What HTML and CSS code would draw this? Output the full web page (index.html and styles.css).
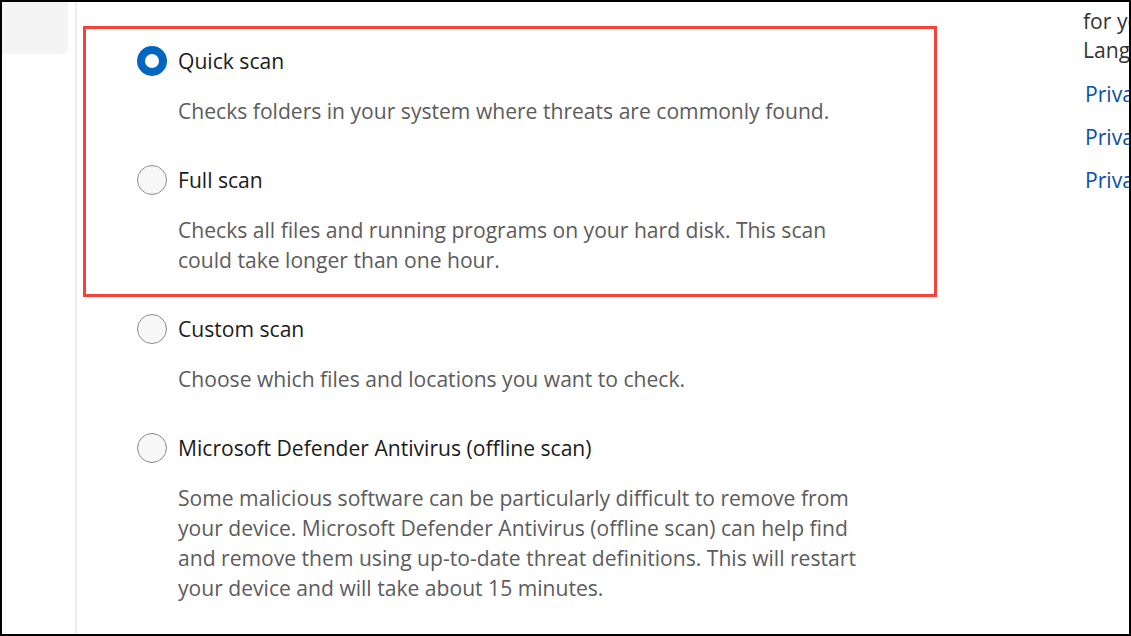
FILE: index.html
```html
<!DOCTYPE html>
<html lang="en">
<head>
<meta charset="utf-8">
<link rel="stylesheet" href="styles.css">
<title>Scan options</title>
</head>
<body>
<div class="frame">
  <aside class="sidebar">
    <div class="nav-item"></div>
  </aside>
  <main class="main">
    <section class="highlight">
      <div class="option">
        <div class="option-head">
          <span class="radio checked"></span>
          <span class="option-title">Quick scan</span>
        </div>
        <p class="option-desc">Checks folders in your system where threats are commonly found.</p>
      </div>
      <div class="option">
        <div class="option-head">
          <span class="radio"></span>
          <span class="option-title">Full scan</span>
        </div>
        <p class="option-desc">Checks all files and running programs on your hard disk. This scan could take longer than one hour.</p>
      </div>
    </section>
    <div class="option-list">
      <div class="option">
        <div class="option-head">
          <span class="radio"></span>
          <span class="option-title">Custom scan</span>
        </div>
        <p class="option-desc">Choose which files and locations you want to check.</p>
      </div>
      <div class="option">
        <div class="option-head">
          <span class="radio"></span>
          <span class="option-title">Microsoft Defender Antivirus (offline scan)</span>
        </div>
        <p class="option-desc">Some malicious software can be particularly difficult to remove from your device. Microsoft Defender Antivirus (offline scan) can help find and remove them using up-to-date threat definitions. This will restart your device and will take about 15 minutes.</p>
      </div>
    </div>
  </main>
  <aside class="side-info">
    <p class="side-text">for your<br>Language</p>
    <div class="side-links">
      <a class="side-link" href="#">Privacy settings</a>
      <a class="side-link" href="#">Privacy dashboard</a>
      <a class="side-link" href="#">Privacy Statement</a>
    </div>
  </aside>
</div>
</body>
</html>
```

FILE: styles.css
```css
html, body {
  margin: 0;
  padding: 0;
  background: #000;
}

.frame {
  margin: 2px;
  width: 1127px;
  height: 632px;
  background: #fff;
  overflow: hidden;
  display: flex;
  font-family: "Open Sans", "Noto Sans", sans-serif;
  font-size: 21.1px;
}

.sidebar {
  width: 73px;
  flex: none;
  border-right: 2px solid #ededed;
}

.nav-item {
  width: 76px;
  height: 62px;
  margin-top: -10px;
  margin-left: -10px;
  background: #f4f4f4;
  border-radius: 7px;
}

.main {
  width: 860px;
  flex: none;
  padding-left: 6px;
  padding-top: 24px;
  box-sizing: border-box;
}

.highlight {
  box-sizing: border-box;
  width: 854px;
  border: 3px solid #f5433a;
  padding: 17px 0 19px 51px;
  display: flex;
  flex-direction: column;
  gap: 39px;
  margin-bottom: 17px;
}

.option-list {
  padding-left: 54px;
  display: flex;
  flex-direction: column;
  gap: 39px;
}

.option-head {
  display: flex;
  align-items: center;
  gap: 11px;
  height: 30px;
}

.radio {
  width: 30px;
  height: 30px;
  box-sizing: border-box;
  border-radius: 50%;
  border: 1px solid #8a8a8a;
  background: #f7f7f7;
  flex: none;
}

.radio.checked {
  border: 8px solid #0067c0;
  background: #fff;
}

.option-title {
  color: #1b1b1b;
  line-height: 30px;
}

.option-desc {
  margin: 20px 0 0 41px;
  color: #5c5c5c;
  line-height: 30px;
  max-width: 692px;
}

.side-info {
  flex: none;
  width: 200px;
  padding-left: 146px;
  display: flex;
  flex-direction: column;
  margin-top: 4px;
}

.side-text {
  margin: 0;
  color: #333;
  line-height: 29px;
  white-space: nowrap;
}

.side-links {
  display: flex;
  flex-direction: column;
  gap: 13px;
  margin-top: 15px;
  padding-left: 2px;
}

.side-link {
  color: #0b50a6;
  text-decoration: none;
  line-height: 30px;
  white-space: nowrap;
}
```
